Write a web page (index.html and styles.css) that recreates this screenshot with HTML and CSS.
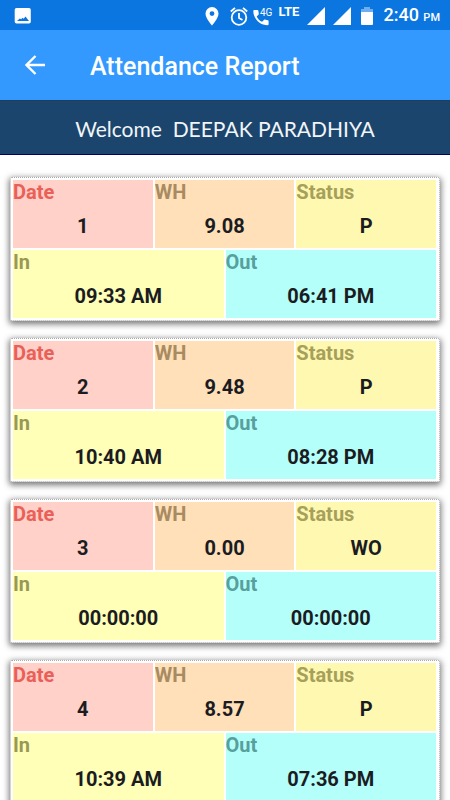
FILE: index.html
```html
<!DOCTYPE html>
<html lang="en">
<head>
  <meta charset="UTF-8">
  <meta name="viewport" content="width=device-width, initial-scale=1">
  <title>Attendance Report</title>
  <link rel="stylesheet" href="styles.css">
</head>
<body>
  <div class="status-bar">
    <svg class="icon-photo" width="18" height="18" viewBox="0 0 18 18" fill="#fff"><path fill-rule="evenodd" d="M2.500 1h12.500a1.800 1.800 0 0 1 1.800 1.800v12a1.800 1.800 0 0 1-1.800 1.800h-12.500a1.800 1.800 0 0 1-1.800-1.800v-12a1.800 1.800 0 0 1 1.800-1.800zM3 14h12l-3.500-4.500-1.800 2.300-1.200-1-1.300 1.400-1.400-.7z"/></svg>
    <div class="status-icons">
      <svg width="14" height="19" viewBox="0 0 14 19"><path fill="#fff" fill-rule="evenodd" d="M7 0a6.500 6.500 0 0 0-6.500 6.500C.5 11.300 7 18.500 7 18.500s6.500-7.200 6.500-12A6.500 6.500 0 0 0 7 0zm0 4.200a2.400 2.400 0 1 1 0 4.800 2.400 2.400 0 0 1 0-4.800z"/></svg>
      <svg class="alarm" width="18" height="19" viewBox="0 0 18 19" fill="none" stroke="#fff" stroke-width="1.800"><circle cx="9" cy="10.500" r="7.300"/><path d="M.8 4.500l4.200-3.600M17.200 4.500l-4.200-3.600M9 6v5l3.500 2"/></svg>
      <svg class="call" width="20" height="19" viewBox="0 0 20 19" fill="#fff"><path d="M1.200 3h3.200c.5 0 .8.300.9.800l.5 3c0 .4-.1.700-.3.900l-1.800 1.700c1.200 2.500 2.900 4.200 5.400 5.400l1.800-1.900c.2-.2.600-.3.900-.3l3 .6c.5.100.8.400.8.900v3.200c0 .5-.4.900-.9.900C7 18.200.3 11.500.3 3.900c0-.5.400-.9.900-.9z"/><text class="tiny" x="7" y="9">4G</text></svg>
      <span class="lte">LTE</span>
      <svg width="18" height="18" viewBox="0 0 18 18"><path fill="#fff" d="M18 0v18H0z"/></svg>
      <svg width="18" height="18" viewBox="0 0 18 18"><path fill="#fff" d="M18 0v18H0z"/></svg>
      <svg class="battery" width="12" height="18" viewBox="0 0 12 18"><path fill="#6eaeef" d="M3 0h6v2h3v4H0V2h3z"/><path fill="#fff" d="M0 5h12v12a1 1 0 0 1-1 1H1a1 1 0 0 1-1-1z"/></svg>
      <span class="clock">2:40 <small>PM</small></span>
    </div>
  </div>

  <header class="app-bar">
    <button class="back" type="button" aria-label="Back">
      <svg width="20" height="20" viewBox="0 0 20 20" fill="none" stroke="#fff" stroke-width="2.400"><path d="M20 10H2M10.500 1L1.500 10l9 9"/></svg>
    </button>
    <h1>Attendance Report</h1>
  </header>

  <div class="welcome">Welcome&nbsp; DEEPAK PARADHIYA</div>

  <main class="list">
    <dl class="card">
      <div class="cell date"><dt>Date</dt><dd>1</dd></div>
      <div class="cell hours"><dt>WH</dt><dd>9.08</dd></div>
      <div class="cell status"><dt>Status</dt><dd>P</dd></div>
      <div class="cell in"><dt>In</dt><dd>09:33 AM</dd></div>
      <div class="cell out"><dt>Out</dt><dd>06:41 PM</dd></div>
    </dl>
    <dl class="card">
      <div class="cell date"><dt>Date</dt><dd>2</dd></div>
      <div class="cell hours"><dt>WH</dt><dd>9.48</dd></div>
      <div class="cell status"><dt>Status</dt><dd>P</dd></div>
      <div class="cell in"><dt>In</dt><dd>10:40 AM</dd></div>
      <div class="cell out"><dt>Out</dt><dd>08:28 PM</dd></div>
    </dl>
    <dl class="card">
      <div class="cell date"><dt>Date</dt><dd>3</dd></div>
      <div class="cell hours"><dt>WH</dt><dd>0.00</dd></div>
      <div class="cell status"><dt>Status</dt><dd>WO</dd></div>
      <div class="cell in"><dt>In</dt><dd>00:00:00</dd></div>
      <div class="cell out"><dt>Out</dt><dd>00:00:00</dd></div>
    </dl>
    <dl class="card">
      <div class="cell date"><dt>Date</dt><dd>4</dd></div>
      <div class="cell hours"><dt>WH</dt><dd>8.57</dd></div>
      <div class="cell status"><dt>Status</dt><dd>P</dd></div>
      <div class="cell in"><dt>In</dt><dd>10:39 AM</dd></div>
      <div class="cell out"><dt>Out</dt><dd>07:36 PM</dd></div>
    </dl>
  </main>
</body>
</html>
```
FILE: styles.css
```css
* {
  box-sizing: border-box;
}

body {
  margin: 0;
  height: 100vh;
  display: flex;
  flex-direction: column;
  background: #fafafa;
  font-family: Roboto, sans-serif;
}

svg {
  display: block;
  flex: none;
}

.status-bar {
  flex: none;
  display: flex;
  align-items: center;
  justify-content: space-between;
  height: 30px;
  padding: 2px 10px 0 14px;
  background: #0b76e0;
  color: #fff;
}

.status-icons {
  display: flex;
  align-items: center;
  gap: 8px;
}

.alarm {
  margin-left: 3px;
}

.call {
  margin-left: -3px;
}

.tiny {
  font-size: 10px;
}

.lte {
  align-self: flex-start;
  margin-left: -3px;
  font-size: 13px;
  font-weight: 700;
  line-height: 14px;
}

.battery {
  margin-left: 2px;
}

.clock {
  margin-left: 2px;
  font-size: 18px;
  font-weight: 500;
  line-height: 20px;
}

.clock small {
  font-size: 11px;
}

.app-bar {
  flex: none;
  display: flex;
  align-items: center;
  height: 70px;
  padding: 0 25px;
  background: #3399ff;
  color: #fff;
}

.back {
  padding: 0;
  border: 0;
  background: none;
  cursor: pointer;
}

.app-bar h1 {
  margin: 0 0 0 45px;
  padding-top: 4px;
  font-size: 25px;
  font-weight: 500;
  line-height: 30px;
}

.welcome {
  flex: none;
  padding: 16px 0 13px;
  border-top: 1px solid #1c3f60;
  border-bottom: 1px solid #000066;
  background: #1b456c;
  color: #f2f5f8;
  font-family: "Century Gothic", "URW Gothic", Lato, sans-serif;
  font-size: 21px;
  line-height: 24px;
  text-align: center;
}

.list {
  flex: 1;
  min-height: 0;
  padding: 22px 10px 18px;
  overflow-y: auto;
  scrollbar-width: none;
  background: #fff;
}

.card {
  display: grid;
  grid-template-columns: repeat(6, 1fr);
  gap: 2px;
  margin: 0 0 17px;
  padding: 2px 3px 2px 2px;
  border: 1px dotted #aaa;
  border-radius: 2px;
  background: #fff;
  box-shadow: 0 2px 6px 1px #777;
}

.cell {
  grid-column: span 2;
  height: 68px;
  font-size: 20px;
  font-weight: 700;
  line-height: 24px;
}

.cell dd {
  margin: 10px 0 0;
  color: #1b1c22;
  text-align: center;
}

.date {
  background: #ffd1c8;
  color: #ea6058;
}

.hours {
  background: #ffe0b8;
  color: #a98b62;
}

.status {
  background: #fff8b0;
  color: #a6a05a;
}

.in,
.out {
  grid-column: span 3;
}

.in {
  background: #ffffb8;
  color: #999955;
}

.out {
  background: #b5fffb;
  color: #57a09c;
}
```
